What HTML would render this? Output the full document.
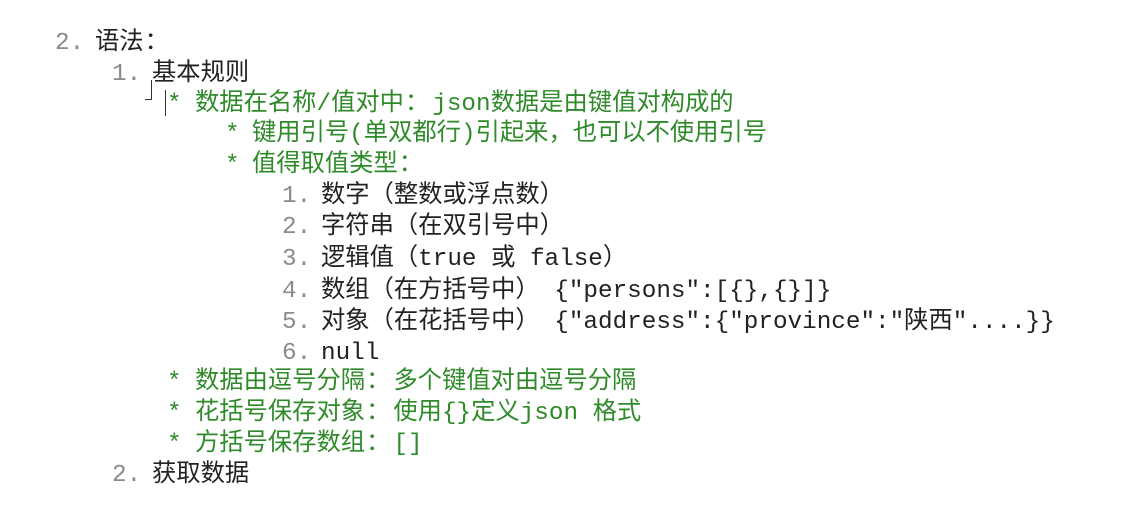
<!DOCTYPE html>
<html><head><meta charset="utf-8"><style>
body{margin:0;width:1134px;height:525px;background:#fff;overflow:hidden;position:relative;font-family:"Liberation Mono","Noto Sans CJK SC",monospace;font-size:24.3px}
.l{position:absolute;white-space:pre;line-height:26px;margin-top:1px}
.n{color:#8a8a8a}
.k{color:#222}
.g{color:#2f8a2a}
.c{padding:0 3px 0 1px}
</style></head><body>
<div class="l n" style="left:55px;top:30px">2.</div><div class="l k" style="left:95px;top:30px">语法<span class="c">：</span></div>
<div class="l n" style="left:112px;top:61px">1.</div><div class="l k" style="left:152px;top:61px">基本规则</div>
<div style="position:absolute;left:151px;top:80px;width:1px;height:20px;background:#333"></div>
<div style="position:absolute;left:145px;top:99px;width:7px;height:1px;background:#333"></div>
<div style="position:absolute;left:165px;top:90px;width:1px;height:26px;background:#333"></div>
<div class="l g" style="left:167px;top:91px">*</div><div class="l g" style="left:195px;top:91px">数据在名称/值对中<span class="c">：</span>json数据是由键值对构成的</div>
<div class="l g" style="left:225px;top:121px">*</div><div class="l g" style="left:252px;top:121px">键用引号(单双都行)引起来，也可以不使用引号</div>
<div class="l g" style="left:225px;top:152px">*</div><div class="l g" style="left:252px;top:152px">值得取值类型<span class="c">：</span></div>
<div class="l n" style="left:282px;top:183px">1.</div><div class="l k" style="left:321px;top:183px">数字（整数或浮点数）</div>
<div class="l n" style="left:282px;top:214px">2.</div><div class="l k" style="left:321px;top:214px">字符串（在双引号中）</div>
<div class="l n" style="left:282px;top:246px">3.</div><div class="l k" style="left:321px;top:246px">逻辑值（true 或 false）</div>
<div class="l n" style="left:282px;top:278px">4.</div><div class="l k" style="left:321px;top:278px">数组（在方括号中） {"persons":[{},{}]}</div>
<div class="l n" style="left:282px;top:309px">5.</div><div class="l k" style="left:321px;top:309px">对象（在花括号中） {"address":{"province":"陕西"....}}</div>
<div class="l n" style="left:282px;top:340px">6.</div><div class="l k" style="left:321px;top:340px">null</div>
<div class="l g" style="left:167px;top:369px">*</div><div class="l g" style="left:195px;top:369px">数据由逗号分隔<span class="c">：</span>多个键值对由逗号分隔</div>
<div class="l g" style="left:167px;top:400px">*</div><div class="l g" style="left:195px;top:400px">花括号保存对象<span class="c">：</span>使用{}定义json 格式</div>
<div class="l g" style="left:167px;top:431px">*</div><div class="l g" style="left:195px;top:431px">方括号保存数组<span class="c">：</span>[]</div>
<div class="l n" style="left:112px;top:462px">2.</div><div class="l k" style="left:152px;top:462px">获取数据</div>
</body></html>
